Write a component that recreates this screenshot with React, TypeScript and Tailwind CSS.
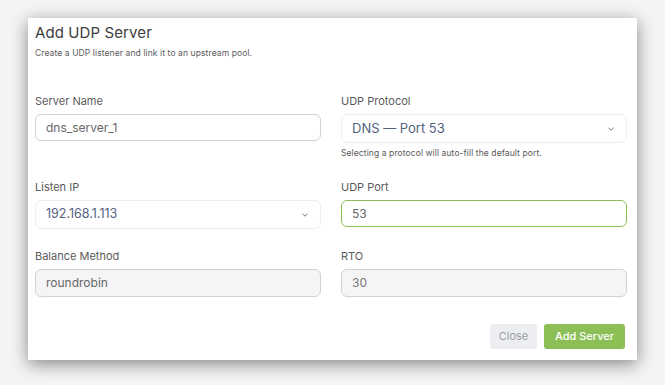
import React from "react";

const Chevron = () => (
  <svg width="8" height="6" viewBox="0 0 8 6" className="absolute right-[11px] top-1/2 -translate-y-1/2">
    <path d="M1.5 1.8 L4 4.2 L6.5 1.8" fill="none" stroke="#777" strokeWidth="1" />
  </svg>
);

const Label = ({ children }: { children: React.ReactNode }) => (
  <div className="text-[11px] leading-[14px] text-[#5a5a5a] mb-[6px]">{children}</div>
);

export default function App() {
  return (
    <div
      className="w-[665px] h-[385px] bg-[#f2f5f4] pt-[18px] pl-[28px]"
      style={{ fontFamily: "Inter, 'Open Sans', sans-serif" }}
    >
      <div className="w-[609px] h-[342px] bg-white shadow-[0_4px_16px_rgba(0,0,0,0.45)] pl-[7px] pr-[10px] pt-[5px] flex flex-col">
        <div className="text-[15px] leading-[20px] text-[#3d3d3d] tracking-[0.1px]">Add UDP Server</div>
        <div className="text-[8.5px] leading-[12px] text-[#5a5a5a] mt-[4px] tracking-[0.1px]">
          Create a UDP listener and link it to an upstream pool.
        </div>

        <div className="mt-[35px] grid grid-cols-2 gap-x-[20px] h-[86px]">
          <div>
            <Label>Server Name</Label>
            <div className="h-[27px] border border-[#cfd2d6] rounded-[6px] flex items-center pl-[10px] text-[12px] text-[#666]">
              dns_server_1
            </div>
          </div>
          <div>
            <Label>UDP Protocol</Label>
            <div className="relative h-[29px] border border-[#eceef2] rounded-[6px] flex items-center pl-[10px] text-[13px] text-[#55627f]">
              DNS — Port 53
              <Chevron />
            </div>
            <div className="text-[8.5px] leading-[12px] text-[#5a5a5a] mt-[4px] tracking-[0.1px]">
              Selecting a protocol will auto-fill the default port.
            </div>
          </div>
        </div>

        <div className="grid grid-cols-2 gap-x-[20px] h-[69px]">
          <div>
            <Label>Listen IP</Label>
            <div className="relative h-[29px] border border-[#eceef2] rounded-[6px] flex items-center pl-[10px] text-[12.5px] text-[#55627f]">
              192.168.1.113
              <Chevron />
            </div>
          </div>
          <div>
            <Label>UDP Port</Label>
            <div className="h-[27px] border border-[#8cbf55] rounded-[6px] flex items-center pl-[10px] text-[12px] text-[#666]">
              53
            </div>
          </div>
        </div>

        <div className="grid grid-cols-2 gap-x-[20px]">
          <div>
            <Label>Balance Method</Label>
            <div className="h-[28px] border border-[#cfd2d6] bg-[#f5f5f7] rounded-[6px] flex items-center pl-[10px] text-[12px] text-[#666]">
              roundrobin
            </div>
          </div>
          <div>
            <Label>RTO</Label>
            <div className="h-[28px] border border-[#cfd2d6] bg-[#f5f5f7] rounded-[6px] flex items-center pl-[10px] text-[12px] text-[#777]">
              30
            </div>
          </div>
        </div>

        <div className="mt-[27px] flex justify-end gap-[7px] pr-[2px]">
          <div className="w-[47px] h-[25px] rounded-[3px] bg-[#eceef1] flex items-center justify-center text-[11px] text-[#9a9da3]">
            Close
          </div>
          <div className="w-[81px] h-[25px] rounded-[3px] bg-[#8cbf55] flex items-center justify-center text-[11px] font-medium text-white">
            Add Server
          </div>
        </div>
      </div>
    </div>
  );
}
